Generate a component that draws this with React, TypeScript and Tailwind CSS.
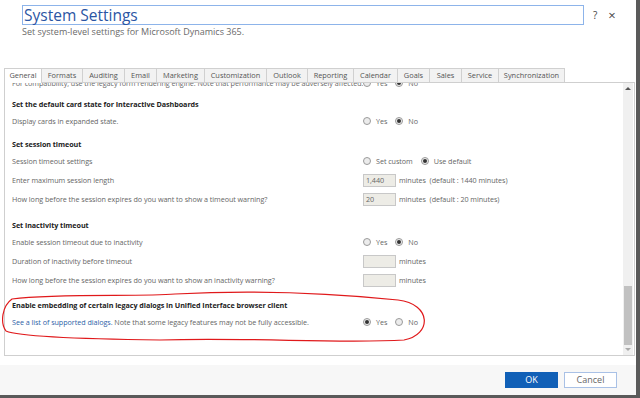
import React from "react";

const tabs: [string, number][] = [
  ["General", 38],
  ["Formats", 41],
  ["Auditing", 42],
  ["Email", 32],
  ["Marketing", 48],
  ["Customization", 62],
  ["Outlook", 41],
  ["Reporting", 46],
  ["Calendar", 44],
  ["Goals", 32],
  ["Sales", 32],
  ["Service", 37],
  ["Synchronization", 66],
];

function Radio({ checked, label }: { checked?: boolean; label: string }) {
  return (
    <span className="flex items-center gap-[5px]">
      <span className="w-[8px] h-[8px] rounded-full border border-[#9a9a9a] bg-[#ececec] flex items-center justify-center">
        {checked ? <span className="w-[4px] h-[4px] rounded-full bg-[#333]" /> : null}
      </span>
      <span className="text-[#666]">{label}</span>
    </span>
  );
}

function Input({ value }: { value?: string }) {
  return (
    <span className="w-[33px] h-[13px] border border-[#c8c8c8] bg-[#edece6] text-[#666] pl-[2px] leading-[11px] flex items-center">
      {value ?? ""}
    </span>
  );
}

function Row({ label, children, link }: { label?: string; children?: React.ReactNode; link?: boolean }) {
  return (
    <div className="flex items-center h-[19px]">
      <div className="w-[351px] text-[#666] whitespace-nowrap">
        {link ? (
          <>
            <span className="text-[#2e5fa7]">See a list of supported dialogs.</span> Note that some legacy features may not be fully accessible.
          </>
        ) : (
          label
        )}
      </div>
      <div className="flex items-center gap-[8px]">{children}</div>
    </div>
  );
}

function Heading({ text, mt }: { text: string; mt: string }) {
  return <div className={`h-[16px] flex items-center font-bold text-[#222] ${mt}`}>{text}</div>;
}

export default function App() {
  return (
    <div
      className="w-[640px] h-[398px] bg-[#5a5a5a] overflow-hidden"
      style={{ fontFamily: '"Open Sans", "Noto Sans", sans-serif' }}
    >
      <div className="w-[636px] h-[395px] bg-white flex flex-col relative">
        {/* Header */}
        <div className="flex items-center pt-[5px] pl-[22px]">
          <div className="w-[562px] h-[20px] border border-[#8db4ea] flex items-center pl-[1px]">
            <span className="text-[15.5px] leading-[18px] text-[#2b55a3]">System Settings</span>
          </div>
          <span className="ml-[9px] text-[10px] text-[#444]">?</span>
          <span className="ml-[11px] text-[13px] leading-none text-[#444]">×</span>
        </div>
        <div className="pl-[22px] h-[14px] flex items-center text-[9px] text-[#6a6a6a]">
          Set system-level settings for Microsoft Dynamics 365.
        </div>

        {/* Tabs */}
        <div className="flex pl-[4px] mt-[29px] h-[14px] text-[7.4px] text-[#555]">
          {tabs.map(([t, w], i) => (
            <div
              key={t}
              style={{ width: w }}
              className={
                i === 0
                  ? "h-[15px] bg-white border-t border-l border-r border-[#d0d0d0] flex items-center justify-center z-10"
                  : "h-[14px] bg-[#f2f2f2] border-t border-r border-[#d0d0d0] flex items-center justify-center"
              }
            >
              {t}
            </div>
          ))}
        </div>

        {/* Panel */}
        <div className="ml-[4px] w-[631px] h-[274px] border border-[#cfcfcf] flex text-[7.2px] tracking-[-0.05px] relative">
          <div className="flex-1 overflow-hidden pl-[7px]">
            <div className="mt-[-9px] flex items-center h-[19px]">
              <div className="w-[351px] text-[#666] whitespace-nowrap overflow-hidden">
                For compatibility, use the legacy form rendering engine. Note that performance may be adversely affected.
              </div>
              <div className="flex items-center gap-[8px]">
                <Radio label="Yes" />
                <Radio checked label="No" />
              </div>
            </div>
            <Heading text="Set the default card state for Interactive Dashboards" mt="mt-[3px]" />
            <Row label="Display cards in expanded state.">
              <Radio label="Yes" />
              <Radio checked label="No" />
            </Row>
            <Heading text="Set session timeout" mt="mt-[5px]" />
            <Row label="Session timeout settings">
              <Radio label="Set custom" />
              <Radio checked label="Use default" />
            </Row>
            <Row label="Enter maximum session length">
              <span className="flex items-center gap-[3px] text-[#666]">
                <Input value="1,440" />
                <span>minutes&nbsp; (default : 1440 minutes)</span>
              </span>
            </Row>
            <Row label="How long before the session expires do you want to show a timeout warning?">
              <span className="flex items-center gap-[3px] text-[#666]">
                <Input value="20" />
                <span>minutes&nbsp; (default : 20 minutes)</span>
              </span>
            </Row>
            <Heading text="Set inactivity timeout" mt="mt-[8px]" />
            <Row label="Enable session timeout due to inactivity">
              <Radio label="Yes" />
              <Radio checked label="No" />
            </Row>
            <Row label="Duration of inactivity before timeout">
              <span className="flex items-center gap-[3px] text-[#666]">
                <Input />
                <span>minutes</span>
              </span>
            </Row>
            <Row label="How long before the session expires do you want to show an inactivity warning?">
              <span className="flex items-center gap-[3px] text-[#666]">
                <Input />
                <span>minutes</span>
              </span>
            </Row>
            <Heading text="Enable embedding of certain legacy dialogs in Unified Interface browser client" mt="mt-[7px]" />
            <Row link>
              <Radio checked label="Yes" />
              <Radio label="No" />
            </Row>
          </div>
          {/* Scrollbar */}
          <div className="w-[10px] bg-[#f0f0f0] flex flex-col items-center mr-[1px]">
            <div className="h-[10px] flex items-center justify-center">
              <svg width="6" height="4" viewBox="0 0 6 4"><path d="M0 4 L3 1 L6 4Z" fill="#555" /></svg>
            </div>
            <div className="flex-1" />
            <div className="w-[8px] h-[59px] bg-[#c1c1c1]" />
            <div className="h-[10px] flex items-center justify-center">
              <svg width="6" height="4" viewBox="0 0 6 4"><path d="M0 0 L6 0 L3 3Z" fill="#aaa" /></svg>
            </div>
          </div>
        </div>

        {/* Footer */}
        <div className="mt-[9px] flex-1 bg-[#f7f7f7] flex items-start justify-end pt-[7px] pr-[19px] gap-[6px]">
          <button className="w-[53px] h-[16px] bg-[#1160b7] text-white text-[9px] flex items-center justify-center">
            OK
          </button>
          <button className="w-[53px] h-[16px] bg-white border border-[#a9c1e6] text-[#666] text-[9px] flex items-center justify-center">
            Cancel
          </button>
        </div>

        {/* Red annotation */}
        <svg className="absolute left-0 top-0 pointer-events-none" width="636" height="395" viewBox="0 0 636 395">
          <path
            d="M 12 299 C 60 293 140 297 175 294 C 250 290 330 293 398 300 C 432 304 432 335 404 340 C 340 344 250 337 160 340 C 80 339 20 337 6 331 C 0 323 2 306 12 299 Z"
            fill="none"
            stroke="#e0191b"
            strokeWidth="1.2"
          />
        </svg>
      </div>
    </div>
  );
}
